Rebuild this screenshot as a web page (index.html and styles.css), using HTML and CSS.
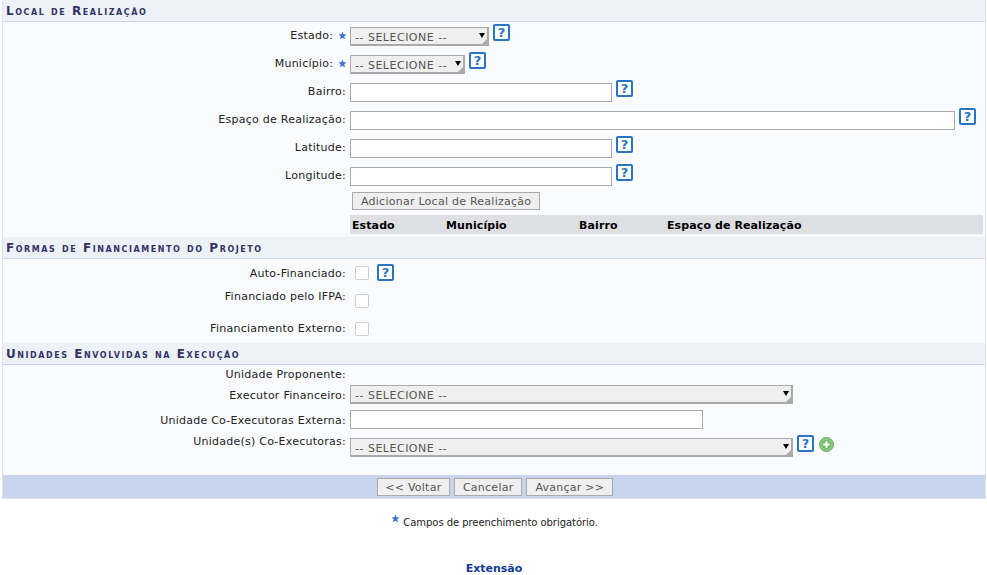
FILE: index.html
```html
<!DOCTYPE html>
<html>
<head>
  <title>Local de Realização</title>
  <link rel="stylesheet" href="styles.css">
</head>
<body>

<svg class="defs" width="0" height="0">
  <symbol id="star" viewBox="0 0 10 10">
    <path d="M5 .5 6.2 3.6 9.5 3.8 6.9 5.9 7.8 9.2 5 7.4 2.2 9.2 3.1 5.9 .5 3.8 3.8 3.6Z" fill="#3f6fd0"/>
  </symbol>
</svg>

<div class="formulario">
  <h3 class="secao">Local de Realização</h3>
  <div class="corpo corpo-local">
    <div class="linha">
      <label class="rotulo">Estado: <svg class="estrela"><use href="#star"/></svg></label>
      <span class="combo combo-estado"><select><option>-- SELECIONE --</option></select></span>
      <span class="ajuda">?</span>
    </div>
    <div class="linha">
      <label class="rotulo">Município: <svg class="estrela"><use href="#star"/></svg></label>
      <span class="combo combo-municipio"><select><option>-- SELECIONE --</option></select></span>
      <span class="ajuda">?</span>
    </div>
    <div class="linha">
      <label class="rotulo">Bairro:</label>
      <input class="campo campo-medio" type="text">
      <span class="ajuda">?</span>
    </div>
    <div class="linha">
      <label class="rotulo">Espaço de Realização:</label>
      <input class="campo campo-longo" type="text">
      <span class="ajuda">?</span>
    </div>
    <div class="linha">
      <label class="rotulo">Latitude:</label>
      <input class="campo campo-medio" type="text">
      <span class="ajuda">?</span>
    </div>
    <div class="linha">
      <label class="rotulo">Longitude:</label>
      <input class="campo campo-medio" type="text">
      <span class="ajuda">?</span>
    </div>
    <div class="linha-botao">
      <button class="botao">Adicionar Local de Realização</button>
    </div>
    <div class="tabela-locais">
      <span class="col-estado">Estado</span>
      <span class="col-municipio">Município</span>
      <span class="col-bairro">Bairro</span>
      <span>Espaço de Realização</span>
    </div>
  </div>

  <h3 class="secao">Formas de Financiamento do Projeto</h3>
  <div class="corpo corpo-financiamento">
    <div class="linha linha-auto">
      <label class="rotulo">Auto-Financiado:</label>
      <span class="caixa"></span>
      <span class="ajuda ajuda-caixa">?</span>
    </div>
    <div class="linha linha-ifpa">
      <label class="rotulo">Financiado pelo IFPA:</label>
      <span class="caixa"></span>
    </div>
    <div class="linha linha-externo">
      <label class="rotulo">Financiamento Externo:</label>
      <span class="caixa"></span>
    </div>
  </div>

  <h3 class="secao">Unidades Envolvidas na Execução</h3>
  <div class="corpo corpo-unidades">
    <div class="linha linha-proponente">
      <label class="rotulo">Unidade Proponente:</label>
    </div>
    <div class="linha linha-executor">
      <label class="rotulo">Executor Financeiro:</label>
      <span class="combo combo-largo"><select><option>-- SELECIONE --</option></select></span>
    </div>
    <div class="linha linha-externa">
      <label class="rotulo">Unidade Co-Executoras Externa:</label>
      <input class="campo campo-externa" type="text">
    </div>
    <div class="linha linha-coexec">
      <label class="rotulo">Unidade(s) Co-Executoras:</label>
      <span class="combo combo-largo"><select><option>-- SELECIONE --</option></select></span>
      <span class="ajuda">?</span>
      <svg class="mais" viewBox="0 0 15 15">
        <circle cx="7.5" cy="7.5" r="7" fill="#8cc981" stroke="#6fa866"/>
        <circle cx="7.5" cy="7.5" r="4.6" fill="#74b767"/>
        <path d="M7.5 4.2v6.6M4.2 7.5h6.6" stroke="#f4fbf2" stroke-width="2.2"/>
      </svg>
    </div>
  </div>

  <div class="acoes">
    <button class="botao">&lt;&lt; Voltar</button>
    <button class="botao">Cancelar</button>
    <button class="botao">Avançar &gt;&gt;</button>
  </div>
</div>

<p class="obrigatorio"><svg class="estrela estrela-nota"><use href="#star"/></svg> Campos de preenchimento obrigatório.</p>

<a class="rodape">Extensão</a>

</body>
</html>
```

FILE: styles.css
```css
* {
  box-sizing: border-box;
}

body {
  font-family: "DejaVu Sans", sans-serif;
  font-size: 11px;
  color: #222;
  background-color: #fff;
  margin: 0;
  padding: 0 1px 0 2px;
}

.defs {
  display: block;
  height: 0;
}

.formulario {
  border-left: 1px solid #dfe3ec;
  border-right: 1px solid #dfe3ec;
  background-color: #fafbfe;
}

.secao {
  margin: 0;
  height: 22px;
  padding: 4px 3px 0;
  font-size: 12px;
  line-height: 14px;
  font-weight: bold;
  font-variant: small-caps;
  letter-spacing: 1.55px;
  color: #333366;
  background-color: #edf1f8;
  border-bottom: 1px solid #c8d5ec;
}

.corpo-local {
  padding-top: 5px;
  height: 215px;
}

.corpo-financiamento {
  height: 84px;
}

.corpo-unidades {
  height: 110px;
}

.linha {
  display: flex;
  align-items: flex-start;
  height: 28px;
}

.rotulo {
  width: 347px;
  flex: none;
  padding: 2px 4px 0 0;
  line-height: 14px;
  letter-spacing: .25px;
  text-align: right;
  white-space: nowrap;
}

.estrela {
  width: 9px;
  height: 9px;
  margin-left: 1px;
  margin-right: -1px;
  vertical-align: -1px;
}

.combo {
  position: relative;
  display: block;
  flex: none;
  height: 19px;
  background-color: #efefef;
  border: 1px solid #aaa;
  border-right-width: 2px;
  border-bottom-width: 2px;
}

.combo select {
  appearance: none;
  display: block;
  width: 100%;
  height: 100%;
  border: none;
  background: transparent;
  padding: 2px 0 0 4px;
  font-family: "DejaVu Sans", sans-serif;
  font-size: 11px;
  letter-spacing: .5px;
  color: #555;
}

/* seta do select */
.combo::after {
  content: "";
  position: absolute;
  right: 2px;
  top: 5px;
  border-left: 3px solid transparent;
  border-right: 3px solid transparent;
  border-top: 5px solid #000;
}

.combo::before {
  content: "";
  position: absolute;
  right: 0;
  bottom: 0;
  border-left: 5px solid transparent;
  border-bottom: 5px solid #aaa;
}

.combo-estado {
  width: 139px;
}

.combo-municipio {
  width: 115px;
}

.combo-largo {
  width: 443px;
}

.ajuda {
  flex: none;
  width: 17px;
  height: 17px;
  margin: -3px 0 0 4px;
  border: 2px solid #2a74c4;
  border-radius: 2px;
  background-color: #fff;
  color: #2a74c4;
  font-size: 13px;
  font-weight: bold;
  line-height: 13px;
  text-align: center;
}

.campo {
  display: block;
  flex: none;
  height: 19px;
  background-color: #fff;
  border: 1px solid #aaa;
  padding: 0;
}

.campo-medio {
  width: 262px;
}

.campo-longo {
  width: 605px;
}

.campo-externa {
  width: 353px;
}

.linha-botao {
  padding-left: 349px;
  margin-top: -3px;
  height: 23px;
}

.botao {
  height: 18px;
  padding: 0 8px;
  background-color: #efefef;
  border: 1px solid #aaa;
  border-radius: 0;
  font-family: "DejaVu Sans", sans-serif;
  font-size: 11px;
  letter-spacing: .25px;
  color: #555;
  cursor: pointer;
}

.tabela-locais {
  display: flex;
  margin-left: 347px;
  width: 633px;
  height: 19px;
  padding: 1px 0 0 2px;
  align-items: center;
  background-color: #dedfe3;
  color: #000;
  font-weight: bold;
  letter-spacing: .1px;
}

.col-estado {
  width: 94px;
}

.col-municipio {
  width: 133px;
}

.col-bairro {
  width: 88px;
}

.caixa {
  flex: none;
  display: block;
  width: 14px;
  height: 14px;
  margin: 0 0 0 5px;
  background-color: #fff;
  border: 1px solid #ccc;
  border-radius: 2px;
}

.linha-auto {
  height: 30px;
  padding-top: 5px;
}

.linha-auto .rotulo {
  padding-top: 3px;
}

.linha-auto .caixa {
  margin-top: 2px;
}

.ajuda-caixa {
  margin-left: 8px;
  margin-top: 0;
}

.linha-ifpa {
  height: 30px;
}

.linha-ifpa .rotulo {
  padding-top: 1px;
}

.linha-ifpa .caixa {
  margin-top: 5px;
}

.linha-externo {
  height: 24px;
}

.linha-externo .rotulo {
  padding-top: 3px;
}

.linha-externo .caixa {
  margin-top: 3px;
}

.linha-proponente {
  height: 20px;
  padding-top: 1px;
}

.linha-executor {
  height: 25px;
}

.linha-executor .rotulo,
.linha-externa .rotulo {
  padding-top: 4px;
}

.linha-externa {
  height: 28px;
}

.linha-coexec .rotulo {
  padding-top: 0;
  margin-top: -3px;
}

.mais {
  flex: none;
  width: 15px;
  height: 15px;
  margin: -1px 0 0 5px;
}

.acoes {
  display: flex;
  justify-content: center;
  gap: 4px;
  height: 24px;
  padding: 3px 0 0 2px;
  background-color: #c8d4eb;
  border-bottom: 1px solid #e3e6ee;
}

.acoes .botao:first-child {
  padding: 0 7.5px;
}

.obrigatorio {
  margin: 15px 0 0;
  text-align: center;
  line-height: 16px;
  font-size: 10px;
  letter-spacing: -.05px;
}

.estrela-nota {
  vertical-align: 3px;
  margin-right: 0;
}

.rodape {
  display: block;
  margin-top: 31px;
  text-align: center;
  color: #123b94;
  font-weight: bold;
}
```
